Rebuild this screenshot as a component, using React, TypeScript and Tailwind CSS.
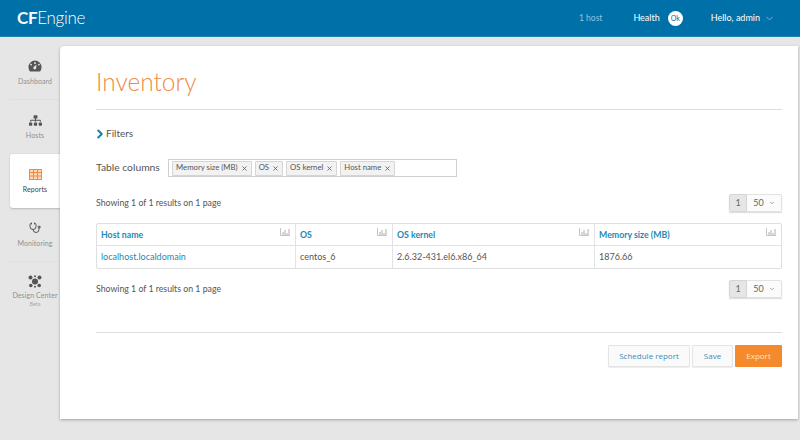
import { ChevronDown, ChevronRight, Stethoscope, X } from "lucide-react"
import { FaSitemap } from "react-icons/fa"
import type { ReactNode } from "react"

function NavItem({ icon, label, sub, active }: { icon: ReactNode; label: string; sub?: string; active?: boolean }) {
  return (
    <div
      className={
        active
          ? "ml-[10px] flex h-[54px] w-[50px] flex-col items-center rounded-l-[3px] bg-white pt-[13px] text-[#444444] shadow-[0_1px_2px_rgba(0,0,0,0.2)]"
          : sub
            ? "ml-[10px] flex h-[54px] w-[50px] flex-col items-center pt-[12px] text-[#909090]"
            : "ml-[10px] flex h-[54px] w-[50px] flex-col items-center border-b border-[#e0e0e0] pt-[13px] text-[#909090]"
      }
    >
      <div className="flex h-[14px] items-center justify-center text-[#555555]">{icon}</div>
      <div className={sub ? "mt-[1px] whitespace-nowrap text-[7px] leading-[12px] tracking-[0.1px]" : "mt-[2px] whitespace-nowrap text-[7px] leading-[12px] tracking-[0.1px]"}>{label}</div>
      {sub && <div className="text-[5.5px] leading-[6px] text-[#aaaaaa]">{sub}</div>}
    </div>
  )
}

function GaugeIcon() {
  return (
    <svg width="14" height="12" viewBox="0 0 14 12">
      <path
        fill="#555555"
        fillRule="evenodd"
        d="M7 0.5A6.5 6.5 0 0 0 0.5 7C0.5 8.8 1 10.3 2 11.5H12C13 10.3 13.5 8.8 13.5 7A6.5 6.5 0 0 0 7 0.5ZM6.2 2.2H7.8V4H6.2ZM3 3.6L4.2 4.8 3.2 5.8 2 4.6ZM11 3.6L12 4.6 10.8 5.8 9.8 4.8ZM6.2 6.5L8.4 4.5 8.2 7.6A1.5 1.5 0 1 1 6.2 6.5Z"
      />
    </svg>
  )
}

function GearsIcon() {
  return (
    <svg width="14" height="13" viewBox="0 0 14 13" fill="#555555">
      <circle cx="7" cy="6.5" r="3" />
      <circle cx="2.5" cy="2.5" r="2" />
      <circle cx="11.5" cy="2.5" r="2" />
      <circle cx="2.8" cy="10.5" r="1.8" />
      <circle cx="11.2" cy="10.5" r="1.8" />
      <circle cx="7" cy="1.2" r="1" />
      <circle cx="7" cy="11.8" r="1" />
    </svg>
  )
}

function TableIcon() {
  return (
    <svg width="13" height="11" viewBox="0 0 13 11" fill="none" stroke="#f08c3c" strokeWidth="1">
      <rect x="0.5" y="0.5" width="12" height="10" fill="#fbd9b8" />
      <path d="M0.5 3.5H12.5M0.5 7H12.5M4.5 0.5V10.5M8.5 0.5V10.5" />
    </svg>
  )
}

function ChartIcon() {
  return (
    <svg width="10" height="8" viewBox="0 0 10 8" fill="none" stroke="#c4c4c4" strokeWidth="1">
      <path d="M0.5 0V7.5H10" />
      <path d="M3 7V4M5 7V2M7 7V5M9 7V1" stroke="#b0b0b0" />
    </svg>
  )
}

function Tag({ label }: { label: string }) {
  return (
    <span className="flex h-[15px] items-center gap-[3px] rounded-[1px] border border-[#d5d5d5] bg-[#f2f2f2] px-[3px] text-[7.75px] text-[#555555]">
      {label}
      <X size={7} strokeWidth={3} className="text-[#666666]" />
    </span>
  )
}

function Pager() {
  return (
    <div className="flex h-[18px] text-[9px] text-[#666666] shadow-[0_1px_1px_rgba(0,0,0,0.12)]">
      <div className="flex w-[18px] items-center justify-center rounded-l-[2px] border border-[#d5d5d5] bg-[#e6e6e6]">1</div>
      <div className="flex w-[35px] items-center justify-center gap-[5px] rounded-r-[2px] border border-l-0 border-[#e2e2e2] bg-[#fbfbfb]">
        50
        <ChevronDown size={6} strokeWidth={3} className="text-[#888888]" />
      </div>
    </div>
  )
}

function ResultsRow() {
  return (
    <div className="flex items-center justify-between">
      <div className="text-[8.75px] text-[#555555]">Showing 1 of 1 results on 1 page</div>
      <Pager />
    </div>
  )
}

function HeaderCell({ label, className }: { label: string; className: string }) {
  return (
    <div className={`flex h-[22px] items-center justify-between border-b border-[#e3e3e3] pl-[4px] pr-[5px] ${className}`}>
      <span className="pt-[1px] text-[8.75px] font-bold text-[#2389b5]">{label}</span>
      <span className="-mt-[5px]"><ChartIcon /></span>
    </div>
  )
}

export default function App() {
  return (
    <div className="h-[440px] w-[800px] overflow-hidden bg-[#e6e6e6] font-['Lato',sans-serif]">
      <header className="flex h-[37px] items-center justify-between border-b border-[#1a85ad] bg-[#0070a8] pl-[17px] pr-[25px] text-white">
        <div className="text-[17px] tracking-[-0.3px]">
          <span className="font-bold">CF</span>
          <span className="font-light">Engine</span>
        </div>
        <div className="flex items-center text-[9px]">
          <span className="mr-[31px] text-[8.5px] text-[#8cc4e0]">1 host</span>
          <span className="mr-[8px]">Health</span>
          <span className="mr-[28px] flex h-[15px] w-[15px] items-center justify-center rounded-full bg-white text-[7px] text-[#0070a8]">Ok</span>
          <span className="mr-[4px]">Hello, admin</span>
          <ChevronDown size={11} className="text-[#7fbfe0]" />
        </div>
      </header>

      <div className="flex">
        <nav className="w-[60px] pt-[9px]">
          <NavItem icon={<GaugeIcon />} label="Dashboard" />
          <NavItem icon={<FaSitemap size={13} />} label="Hosts" />
          <NavItem icon={<TableIcon />} label="Reports" active />
          <NavItem icon={<Stethoscope size={12} strokeWidth={2} />} label="Monitoring" />
          <NavItem icon={<GearsIcon />} label="Design Center" sub="Beta" />
        </nav>

        <main className="mt-[9px] h-[373px] w-[738px] rounded-tl-[4px] bg-white pl-[36px] pr-[16px] shadow-[0_1px_3px_rgba(0,0,0,0.3)]">
          <h1 className="pt-[20px] text-[24.5px] font-light leading-[32px] text-[#ee8a45]">Inventory</h1>
          <div className="mt-[11px] border-t border-[#dddddd]" />

          <div className="mt-[16px] flex items-center text-[10px] text-[#555555]">
            <ChevronRight size={14} strokeWidth={3.5} className="-ml-[3px] text-[#1b7fa8]" />
            <span className="-ml-[1px]">Filters</span>
          </div>

          <div className="mt-[18px] flex items-center">
            <span className="w-[72px] text-[10.3px] text-[#555555]">Table columns</span>
            <div className="flex h-[18px] w-[289px] items-center gap-[3px] border border-[#d0d0d0] px-[3px]">
              <Tag label="Memory size (MB)" />
              <Tag label="OS" />
              <Tag label="OS kernel" />
              <Tag label="Host name" />
            </div>
          </div>

          <div className="mt-[17px]"><ResultsRow /></div>

          <div className="mt-[11px] grid grid-cols-[199px_97px_202px_1fr] rounded-[2px] border border-[#dfdfdf] text-[9px] text-[#555555]">
            <HeaderCell label="Host name" className="border-r" />
            <HeaderCell label="OS" className="border-r" />
            <HeaderCell label="OS kernel" className="border-r" />
            <HeaderCell label="Memory size (MB)" className="" />
            <div className="flex h-[22px] items-center border-r border-[#e3e3e3] pl-[4px] text-[#2389b5]">localhost.localdomain</div>
            <div className="flex h-[22px] items-center border-r border-[#e3e3e3] pl-[4px]">centos_6</div>
            <div className="flex h-[22px] items-center border-r border-[#e3e3e3] pl-[4px]">2.6.32-431.el6.x86_64</div>
            <div className="flex h-[22px] items-center pl-[4px]">1876.66</div>
          </div>

          <div className="mt-[11px]"><ResultsRow /></div>

          <div className="mt-[34px] border-t border-[#dddddd]" />

          <div className="mt-[12px] flex justify-end gap-[2px] font-['Open_Sans',sans-serif] text-[8px]">
            <button className="h-[22px] w-[82px] rounded-[1px] border border-[#e4e4e4] bg-[#fafafa] text-[#3b8db5] shadow-[0_1px_1px_rgba(0,0,0,0.08)]">Schedule report</button>
            <button className="h-[22px] w-[41px] rounded-[1px] border border-[#e4e4e4] bg-[#fafafa] text-[#3b8db5] shadow-[0_1px_1px_rgba(0,0,0,0.08)]">Save</button>
            <button className="h-[22px] w-[47px] rounded-[1px] bg-[#f58a2c] text-[#fde3c8]">Export</button>
          </div>
        </main>
      </div>
    </div>
  )
}
